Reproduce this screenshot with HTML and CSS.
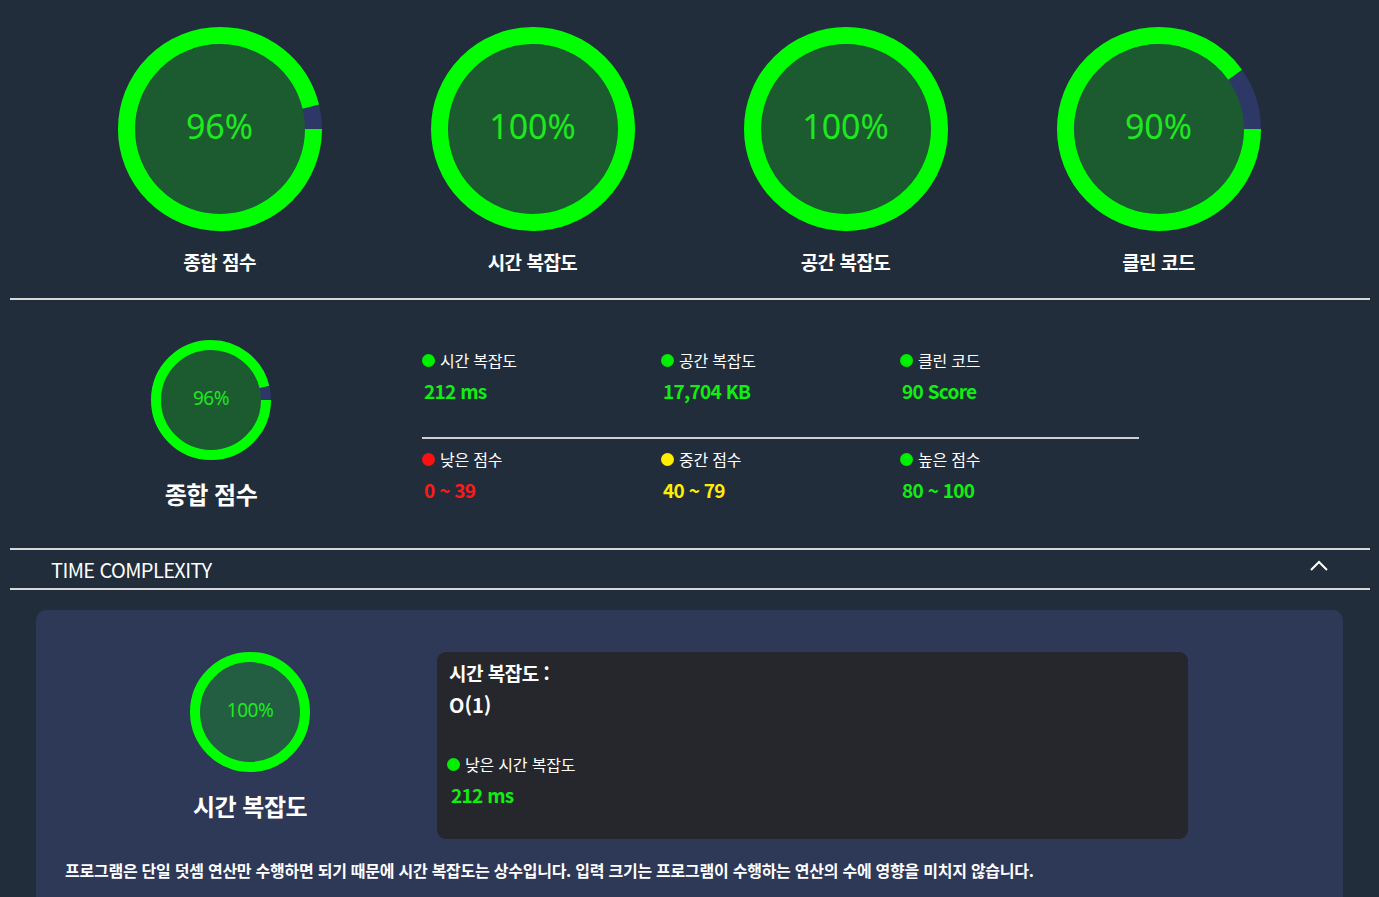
FILE: index.html
```html
<!DOCTYPE html>
<html lang="ko">
<head>
<meta charset="utf-8">
<title>Score</title>
<link rel="stylesheet" href="styles.css">
</head>
<body>
<div class="page">
  <section class="top-scores">
    <div class="score-col">
      <div class="ring big">
        <svg width="204" height="204" viewBox="0 0 204 204">
          <circle cx="102" cy="102" r="86" class="fill-top"/>
          <circle cx="102" cy="102" r="93.5" class="track" stroke-width="17"/>
          <circle cx="102" cy="102" r="93.5" class="arc" stroke-width="17" style="stroke-dasharray: 563.9 587.5"/>
        </svg>
        <span class="pct">96%</span>
      </div>
      <div class="score-label">종합 점수</div>
    </div>
    <div class="score-col">
      <div class="ring big">
        <svg width="204" height="204" viewBox="0 0 204 204">
          <circle cx="102" cy="102" r="86" class="fill-top"/>
          <circle cx="102" cy="102" r="93.5" class="arc" stroke-width="17"/>
        </svg>
        <span class="pct">100%</span>
      </div>
      <div class="score-label">시간 복잡도</div>
    </div>
    <div class="score-col">
      <div class="ring big">
        <svg width="204" height="204" viewBox="0 0 204 204">
          <circle cx="102" cy="102" r="86" class="fill-top"/>
          <circle cx="102" cy="102" r="93.5" class="arc" stroke-width="17"/>
        </svg>
        <span class="pct">100%</span>
      </div>
      <div class="score-label">공간 복잡도</div>
    </div>
    <div class="score-col">
      <div class="ring big">
        <svg width="204" height="204" viewBox="0 0 204 204">
          <circle cx="102" cy="102" r="86" class="fill-top"/>
          <circle cx="102" cy="102" r="93.5" class="track" stroke-width="17"/>
          <circle cx="102" cy="102" r="93.5" class="arc" stroke-width="17" style="stroke-dasharray: 528.7 587.5"/>
        </svg>
        <span class="pct">90%</span>
      </div>
      <div class="score-label">클린 코드</div>
    </div>
  </section>

  <hr class="rule">

  <section class="summary">
    <div class="summary-ring">
      <div class="ring small">
        <svg width="120" height="120" viewBox="0 0 120 120">
          <circle cx="60" cy="60" r="51" class="fill-top"/>
          <circle cx="60" cy="60" r="55" class="track" stroke-width="10"/>
          <circle cx="60" cy="60" r="55" class="arc" stroke-width="10" style="stroke-dasharray: 331.7 345.6"/>
        </svg>
        <span class="pct small-pct">96%</span>
      </div>
      <div class="big-label">종합 점수</div>
    </div>
    <div class="legend">
      <div class="legend-row">
        <div class="legend-item">
          <div class="legend-name"><span class="dot green"></span>시간 복잡도</div>
          <div class="legend-value green-t">212 ms</div>
        </div>
        <div class="legend-item">
          <div class="legend-name"><span class="dot green"></span>공간 복잡도</div>
          <div class="legend-value green-t">17,704 KB</div>
        </div>
        <div class="legend-item">
          <div class="legend-name"><span class="dot green"></span>클린 코드</div>
          <div class="legend-value green-t">90 Score</div>
        </div>
      </div>
      <div class="legend-divider"></div>
      <div class="legend-row">
        <div class="legend-item">
          <div class="legend-name"><span class="dot red"></span>낮은 점수</div>
          <div class="legend-value red-t">0 ~ 39</div>
        </div>
        <div class="legend-item">
          <div class="legend-name"><span class="dot yellow"></span>중간 점수</div>
          <div class="legend-value yellow-t">40 ~ 79</div>
        </div>
        <div class="legend-item">
          <div class="legend-name"><span class="dot green"></span>높은 점수</div>
          <div class="legend-value green-t">80 ~ 100</div>
        </div>
      </div>
    </div>
  </section>

  <div class="acc-head">
    <span class="acc-title">TIME COMPLEXITY</span>
    <svg class="chev" width="20" height="12" viewBox="0 0 20 12">
      <polyline points="2,10 10,2 18,10" fill="none" stroke="#ffffff" stroke-width="2"/>
    </svg>
  </div>

  <section class="card">
    <div class="card-main">
      <div class="card-ring-col">
        <div class="ring small">
          <svg width="120" height="120" viewBox="0 0 120 120">
            <circle cx="60" cy="60" r="51" class="fill-card"/>
            <circle cx="60" cy="60" r="55" class="arc" stroke-width="10"/>
          </svg>
          <span class="pct small-pct">100%</span>
        </div>
        <div class="big-label">시간 복잡도</div>
      </div>
      <div class="detail-box">
        <div class="detail-title">시간 복잡도 :</div>
        <div class="detail-o">O(1)</div>
        <div class="detail-name"><span class="dot green"></span>낮은 시간 복잡도</div>
        <div class="legend-value green-t">212 ms</div>
      </div>
    </div>
    <p class="card-text">프로그램은 단일 덧셈 연산만 수행하면 되기 때문에 시간 복잡도는 상수입니다. 입력 크기는 프로그램이 수행하는 연산의 수에 영향을 미치지 않습니다.</p>
  </section>
</div>
</body>
</html>
```

FILE: styles.css
```css
* { box-sizing: border-box; }

html, body {
  margin: 0;
  padding: 0;
  background: #222d3b;
  color: #ffffff;
  font-family: "Noto Sans CJK KR", "Noto Sans", sans-serif;
  overflow: hidden;
}

.page {
  padding: 0 9px 0 10px;
  height: 897px;
}

.top-scores {
  display: flex;
  padding: 27px 0 0 53px;
}

.score-col {
  width: 313px;
  display: flex;
  flex-direction: column;
  align-items: center;
}

.ring {
  position: relative;
  display: flex;
  align-items: center;
  justify-content: center;
}

.ring svg { display: block; }

.fill-top { fill: #1c5a30; }
.fill-card { fill: #235e42; }

.track {
  fill: none;
  stroke: #2d3866;
}

.arc {
  fill: none;
  stroke: #00ff00;
}

.pct {
  position: absolute;
  left: 0;
  right: 0;
  top: 50%;
  transform: translateY(-50%);
  margin-top: -3px;
  text-align: center;
  font-family: "Noto Sans", sans-serif;
  font-weight: 400;
  font-size: 34px;
  color: #1ee81e;
  line-height: 1;
}

.small-pct {
  font-size: 19px;
  margin-top: -2px;
  letter-spacing: -0.5px;
}

.score-label {
  margin-top: 19px;
  font-size: 19px;
  font-weight: 700;
  line-height: 24px;
  letter-spacing: -0.5px;
}

.rule {
  margin: 24px 0 0 0;
  border: 0;
  height: 2px;
  background: #d8d8d8;
}

.summary {
  display: flex;
  height: 248px;
  padding-top: 40px;
}

.summary-ring {
  width: 402px;
  display: flex;
  flex-direction: column;
  align-items: center;
}

.big-label {
  margin-top: 19px;
  font-size: 24px;
  font-weight: 700;
  line-height: 30px;
  letter-spacing: -0.5px;
}

.legend {
  width: 727px;
  padding-left: 10px;
  padding-top: 9px;
}

.legend-row {
  display: flex;
}

.legend-item {
  width: 239px;
}

.legend-name {
  display: flex;
  align-items: center;
  font-size: 16px;
  line-height: 22px;
  letter-spacing: -0.2px;
}

.dot {
  display: inline-block;
  width: 13px;
  height: 13px;
  border-radius: 50%;
  margin-right: 5px;
}

.dot.green { background: #00ee00; }
.dot.red { background: #ff1010; }
.dot.yellow { background: #ffee00; }

.legend-value {
  margin-top: 8px;
  padding-left: 2px;
  font-size: 19px;
  font-weight: 700;
  line-height: 24px;
  letter-spacing: -0.7px;
}

.green-t { color: #11ee11; }
.red-t { color: #ff1a1a; }
.yellow-t { color: #ffee00; }

.legend-divider {
  height: 2px;
  background: #d0d0d0;
  margin: 34px 0 9px 0;
}

.acc-head {
  display: flex;
  align-items: center;
  justify-content: space-between;
  height: 42px;
  border-top: 2px solid #d8d8d8;
  border-bottom: 2px solid #d8d8d8;
  padding: 0 41px 0 41px;
}

.acc-title {
  font-size: 20px;
  line-height: 24px;
  letter-spacing: -0.6px;
  margin-top: 1px;
}

.chev { margin-top: -6px; }

.card {
  margin: 20px 27px 0 26px;
  background: #2e3857;
  border-radius: 10px;
  padding: 42px 0 30px 0;
}

.card-main {
  display: flex;
  align-items: flex-start;
}

.card-ring-col {
  width: 318px;
  margin-left: 55px;
  display: flex;
  flex-direction: column;
  align-items: center;
}

.detail-box {
  margin-left: 28px;
  width: 751px;
  height: 187px;
  background: #26272c;
  border-radius: 9px;
  padding: 7px 12px;
}

.detail-title {
  font-size: 19px;
  font-weight: 700;
  line-height: 28px;
  letter-spacing: -0.5px;
}

.detail-o {
  font-size: 20px;
  font-weight: 700;
  line-height: 30px;
  margin-top: 3px;
}

.detail-name {
  display: flex;
  align-items: center;
  margin-top: 33px;
  margin-left: -2px;
  font-size: 16px;
  line-height: 22px;
  letter-spacing: -0.2px;
}

.card-text {
  margin: 20px 0 0 29px;
  font-size: 16px;
  font-weight: 700;
  line-height: 22px;
  letter-spacing: -0.25px;
}
```
